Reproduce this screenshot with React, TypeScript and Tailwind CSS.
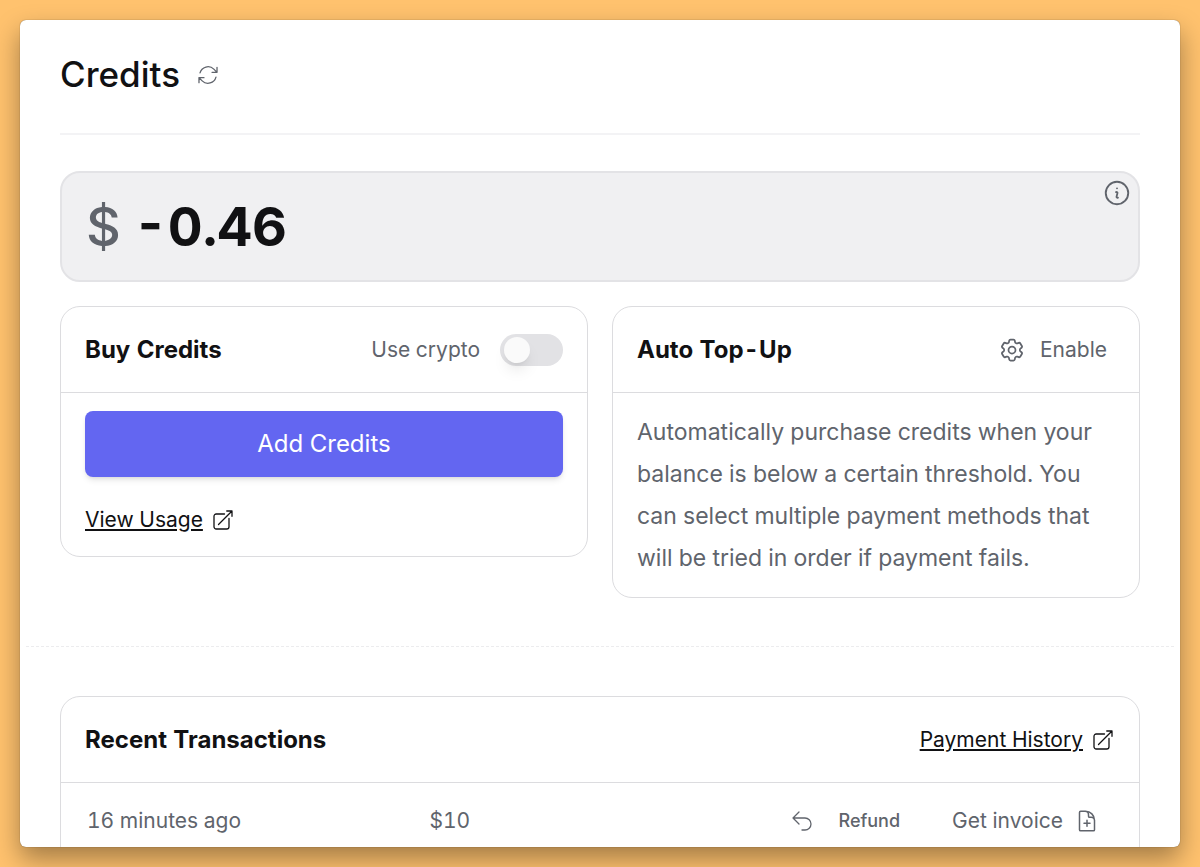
import { useState } from "react";
import type { ReactNode } from "react";
import {
  HiOutlineArrowPath,
  HiOutlineArrowTopRightOnSquare,
  HiOutlineArrowUturnLeft,
  HiOutlineCog6Tooth,
  HiOutlineDocumentPlus,
  HiOutlineInformationCircle,
} from "react-icons/hi2";

function Card({ title, action, children }: { title: string; action: ReactNode; children: ReactNode }) {
  return (
    <section className="rounded-[20px] border border-[#dcdcdf]">
      <header className="flex h-[86px] items-center justify-between border-b border-[#dcdcdf] px-6">
        <h2 className="text-2xl font-bold text-[#111113]">{title}</h2>
        {action}
      </header>
      {children}
    </section>
  );
}

function ExternalLink({ children }: { children: ReactNode }) {
  return (
    <a href="#" className="inline-flex items-center gap-2 text-[21px] leading-8 text-[#111113]">
      <span className="underline underline-offset-2">{children}</span>
      <HiOutlineArrowTopRightOnSquare className="size-6 stroke-[1.3px]" />
    </a>
  );
}

const transactions = [{ when: "16 minutes ago", amount: "$10" }];

export default function App() {
  const [crypto, setCrypto] = useState(false);

  return (
    <div className="h-screen bg-[#ffc26e] p-5 font-[Inter,sans-serif] text-[#60646c] tabular-nums">
      <main className="h-full overflow-hidden rounded-md bg-white shadow-[0_12px_26px_rgba(0,0,0,0.36),0_0_1px_rgba(0,0,0,0.6)]">
        <div className="px-10 pb-12">
          <div className="mb-9 flex h-[115px] items-center gap-4 border-b-2 border-[#f3f3f5] pb-1">
            <h1 className="text-[35px] font-medium text-[#111113]">Credits</h1>
            <button type="button" aria-label="Refresh balance">
              <HiOutlineArrowPath className="size-6 stroke-[1.3px]" />
            </button>
          </div>

          <div className="mb-6 flex h-[111px] items-center justify-between rounded-[20px] border-2 border-[#e3e3e6] bg-[#f0f0f2] px-6">
            <p className="flex gap-3 text-[54px] leading-none">
              <span className="font-medium">$</span>
              <span className="font-bold text-[#111113]">-0.46</span>
            </p>
            <button type="button" aria-label="Balance details" className="-mr-[18px] mt-[5px] self-start">
              <HiOutlineInformationCircle className="size-[30px]" />
            </button>
          </div>

          <div className="grid grid-cols-2 items-start gap-6">
            <Card
              title="Buy Credits"
              action={
                <label className="flex items-center gap-5 text-[21px]">
                  Use crypto
                  <input
                    type="checkbox"
                    role="switch"
                    checked={crypto}
                    onChange={(e) => setCrypto(e.target.checked)}
                    className="flex h-8 w-[63px] appearance-none items-center rounded-full bg-[#e2e2e5] px-1 before:size-[26px] before:rounded-full before:bg-[#fafafa] before:shadow-lg checked:justify-end checked:bg-[#6366f1]"
                  />
                </label>
              }
            >
              <div className="px-6 pt-[18px] pb-5">
                <button
                  type="button"
                  className="mb-[27px] block h-[66px] w-full rounded-lg bg-[#6366f1] text-2xl text-white shadow-md"
                >
                  Add Credits
                </button>
                <div className="flex">
                  <ExternalLink>View Usage</ExternalLink>
                </div>
              </div>
            </Card>

            <Card
              title="Auto Top-Up"
              action={
                <button type="button" className="mr-2 flex items-center gap-3.5 text-[21px]">
                  <HiOutlineCog6Tooth className="size-7" />
                  Enable
                </button>
              }
            >
              <p className="px-6 py-[18px] text-[23px] leading-[42px]">
                Automatically purchase credits when your balance is below a certain threshold. You can select
                multiple payment methods that will be tried in order if payment fails.
              </p>
            </Card>
          </div>
        </div>

        <hr className="mx-1.5 border-dashed border-[#ececee]" />

        <div className="px-10 pt-[49px]">
          <Card title="Recent Transactions" action={<ExternalLink>Payment History</ExternalLink>}>
            <table className="mb-6 w-full text-left text-[21px]">
              <tbody>
                {transactions.map((t) => (
                  <tr key={t.when} className="h-[76px]">
                    <td className="w-[34%] pl-[26px]">{t.when}</td>
                    <td className="pl-0.5">{t.amount}</td>
                    <td className="pr-10">
                      <div className="flex items-center justify-end gap-[52px]">
                        <button type="button" className="flex items-center gap-6 text-lg font-medium">
                          <HiOutlineArrowUturnLeft className="size-6 stroke-[1.3px]" />
                          Refund
                        </button>
                        <button type="button" className="flex items-center gap-3">
                          Get invoice
                          <HiOutlineDocumentPlus className="size-6" />
                        </button>
                      </div>
                    </td>
                  </tr>
                ))}
              </tbody>
            </table>
          </Card>
        </div>
      </main>
    </div>
  );
}
